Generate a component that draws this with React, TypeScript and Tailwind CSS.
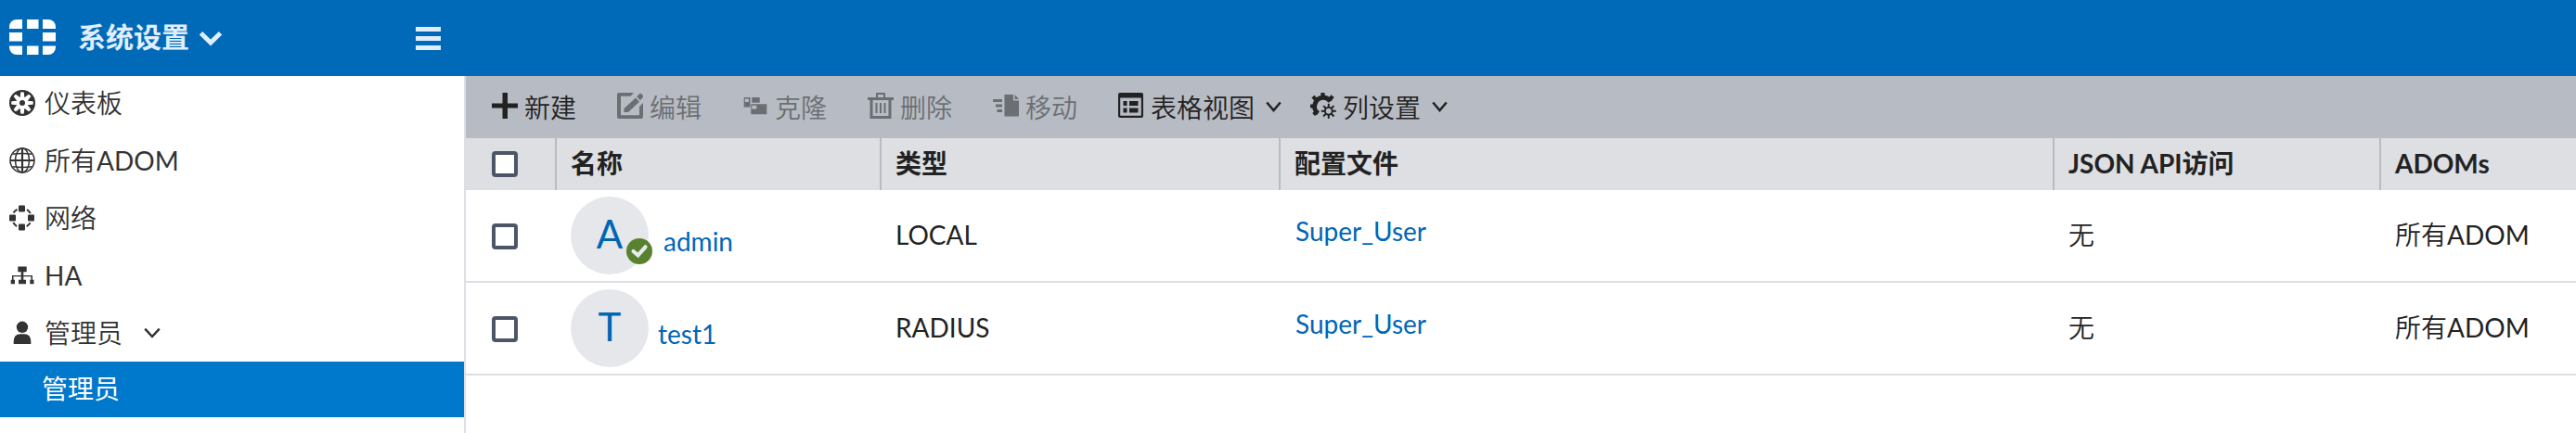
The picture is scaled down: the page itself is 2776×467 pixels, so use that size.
import React from "react";

const FONT = "font-['Lato','Noto_Sans_CJK_SC',sans-serif]";

function Chevron({ w, h, sw, className = "" }: { w: number; h: number; sw: number; className?: string }) {
  return (
    <svg width={w} height={h} viewBox={`0 0 ${w} ${h}`} fill="none" stroke="currentColor" strokeWidth={sw} className={className}>
      <path d={`M${sw / 2} ${sw / 2 + 0.3}L${w / 2} ${h - sw * 0.8}L${w - sw / 2} ${sw / 2 + 0.3}`} />
    </svg>
  );
}

function Label({ text, className = "" }: { text: string; className?: string }) {
  const parts = text.match(/[\x20-\x7e]+|[^\x20-\x7e]+/g) ?? [];
  return (
    <span className={`whitespace-nowrap leading-[40px] ${className}`}>
      {parts.map((p, i) => (
        <span key={i} className={/[\x20-\x7e]/.test(p) ? "font-normal" : "font-[350]"}>
          {p}
        </span>
      ))}
    </span>
  );
}

function Logo() {
  return (
    <svg width="50" height="38" viewBox="0 0 50 38" fill="#fff" className="-mt-[2px]">
      <path d="M8 0H14V10H0V8A8 8 0 0 1 8 0Z" />
      <path d="M19 0H31.500V10H19Z" />
      <path d="M36 0H42A8 8 0 0 1 50 8V10H36Z" />
      <path d="M0 14H14V23.500H0Z" />
      <path d="M36 14H50V23.500H36Z" />
      <path d="M0 28.500H14V38H8A8 8 0 0 1 0 30Z" />
      <path d="M19 28.500H31.500V38H19Z" />
      <path d="M36 28.500H50V30A8 8 0 0 1 42 38H36Z" />
    </svg>
  );
}

function DashboardIcon() {
  return (
    <svg width="28" height="28" viewBox="0 0 28 28" fill="none" stroke="currentColor">
      <circle cx="14" cy="14" r="12.900" strokeWidth="2.200" />
      <circle cx="14" cy="14" r="3" fill="currentColor" stroke="none" />
      {[22.5, 67.5, 112.5, 157.5, 202.5, 247.5, 292.5, 337.5].map((a) => (
        <path key={a} d="M10.300 1L14 7.800L17.700 1Z" fill="currentColor" stroke="none" transform={`rotate(${a} 14 14)`} />
      ))}
    </svg>
  );
}

function GlobeIcon() {
  return (
    <svg width="28" height="28" viewBox="0 0 28 28" fill="none" stroke="currentColor" strokeWidth="1.500">
      <circle cx="14" cy="14" r="13" />
      <ellipse cx="14" cy="14" rx="7.500" ry="13" />
      <path d="M14 1V27M1 14H27" strokeWidth="2.200" />
      <path d="M3.500 7.200Q14 5.800 24.500 7.200M3.500 20.800Q14 22.200 24.500 20.800" />
    </svg>
  );
}

function NetworkIcon() {
  return (
    <svg width="28" height="28" viewBox="0 0 28 28" fill="none" stroke="currentColor" strokeWidth="2">
      <circle cx="13.500" cy="14" r="10.500" strokeDasharray="5.500 10.990" strokeDashoffset="-5.500" />
      <g fill="currentColor" stroke="none">
        <rect x="10" y="0.500" width="7" height="7" rx="1" />
        <rect x="10" y="20.500" width="7" height="7" rx="1" />
        <rect x="0" y="10.500" width="7" height="7" rx="1" />
        <rect x="20" y="10.500" width="7" height="7" rx="1" />
      </g>
    </svg>
  );
}

function HaIcon() {
  return (
    <svg width="28" height="28" viewBox="0 0 28 28" fill="currentColor">
      <path d="M9.300 4.500H18.700V10.300H15.300V14H25V18.700H26.500V23.200H22.300V18.700H23.500V15.300H15.300V18.700H18V23.200H10V18.700H12.700V15.300H4.500V18.700H6V23.200H1.700V18.700H3V14H12.700V10.300H9.300Z" />
    </svg>
  );
}

function UserIcon() {
  return (
    <svg width="28" height="28" viewBox="0 0 28 28" fill="currentColor">
      <circle cx="14" cy="7.800" r="6.200" />
      <path d="M4.700 26V23.500Q4.700 15.300 12 15.300H16Q23.300 15.300 23.300 23.500V26Z" />
    </svg>
  );
}

function PlusIcon() {
  return (
    <svg width="28" height="28" viewBox="0 0 28 28" fill="currentColor">
      <path d="M11.500 0H17V11.500H28V16.500H17V28H11.500V16.500H0V11.500H11.500Z" />
    </svg>
  );
}

function EditIcon() {
  return (
    <svg width="28" height="28" viewBox="0 0 28 28" fill="currentColor">
      <path d="M2 0H18L14.500 3.800H4V24.200H24V15L28 11V26Q28 28 26 28H2Q0 28 0 26V2Q0 0 2 0Z" />
      <path d="M20 5.500L24 9.800L12 21H7.500V17ZM21.200 4.200L24 1.200Q25.200 0.200 26.500 1.400L27.500 2.600Q28.500 4 27.500 5.200L25 8.200Z" />
    </svg>
  );
}

function CloneIcon() {
  return (
    <svg width="28" height="28" viewBox="0 0 28 28" fill="currentColor">
      <path fillRule="evenodd" d="M1.700 5H8.500V15.500H1.700ZM2.800 6.500V10H6.800V6.500Z" />
      <path d="M10.300 5H18.700V10.700H10.300Z" />
      <path fillRule="evenodd" d="M9.300 12.300H26.300V23.300H9.300ZM10.300 13.700V17.500H15.300V13.700Z" />
    </svg>
  );
}

function TrashIcon() {
  return (
    <svg width="28" height="28" viewBox="0 0 28 28" fill="currentColor">
      <path fillRule="evenodd" d="M9 0H19V5H28V8H25.500V28H2.500V8H0V5H9ZM11 2V5H17V2ZM5.500 8V25H22.500V8Z" />
      <path d="M8.500 11H10.500V22H8.500ZM13 11H15V22H13ZM17.500 11H19.500V22H17.500Z" />
    </svg>
  );
}

function MoveIcon() {
  return (
    <svg width="28" height="28" viewBox="0 0 28 28" fill="currentColor">
      <path d="M12.500 2H22V8.500H28V25.500H12.500ZM23.500 2L28 7H23.500Z" />
      <path d="M0 7H10V10H0ZM3 12.500H10V15.500H3ZM4.500 18H10V21H4.500Z" />
    </svg>
  );
}

function TableIcon() {
  return (
    <svg width="28" height="28" viewBox="0 0 28 28" fill="currentColor">
      <path fillRule="evenodd" d="M2 0H25Q27 0 27 2V25Q27 27 25 27H2Q0 27 0 25V2Q0 0 2 0ZM2.200 5.500V24.800H24.800V5.500Z" />
      <path d="M5.500 9H9.500V14H5.500ZM12 9H21.500V14H12ZM5.500 16.500H9.500V21.500H5.500ZM12 16.500H21.500V21.500H12Z" />
    </svg>
  );
}

function GearsIcon() {
  return (
    <svg width="28" height="28" viewBox="0 0 28 28" fill="none" stroke="currentColor">
      <path d="M8.500 22.300A9 9 0 0 1 5.500 11A9 9 0 0 1 21.500 9.500" strokeWidth="5" />
      <path d="M13.500 5V0M5.500 7L3 4M21.500 7L24 3.500M4 14.500H0M6.500 21L3.500 23.500" strokeWidth="4.200" />
      <circle cx="19.800" cy="19.800" r="3.900" strokeWidth="1.900" />
      {[0, 45, 90, 135, 180, 225, 270, 315].map((a) => (
        <path key={a} d="M19.800 15.900V11.800" strokeWidth="2" transform={`rotate(${a} 19.800 19.800)`} />
      ))}
    </svg>
  );
}

const nav = [
  { icon: <DashboardIcon />, label: "仪表板" },
  { icon: <GlobeIcon />, label: "所有ADOM" },
  { icon: <NetworkIcon />, label: "网络" },
  { icon: <HaIcon />, label: "HA" },
  { icon: <UserIcon />, label: "管理员", open: true },
];

const tools = [
  { icon: <PlusIcon />, label: "新建", cls: "w-[135px] text-[#222]" },
  { icon: <EditIcon />, label: "编辑", cls: "w-[135px] text-[#6b6f73]" },
  { icon: <CloneIcon />, label: "克隆", cls: "w-[135px] text-[#6b6f73]" },
  { icon: <TrashIcon />, label: "删除", cls: "w-[135px] text-[#6b6f73]" },
  { icon: <MoveIcon />, label: "移动", cls: "w-[135px] text-[#6b6f73]" },
  { icon: <TableIcon />, label: "表格视图", cls: "w-[207px] text-[#222]", menu: true },
  { icon: <GearsIcon />, label: "列设置", cls: "text-[#222]", menu: true },
];

const GRID = "grid grid-cols-[98px_350px_430px_834px_352px_1fr]";

const rows = [
  { letter: "A", name: "admin", type: "LOCAL", online: true },
  { letter: "T", name: "test1", type: "RADIUS", online: false },
];

function Checkbox() {
  return <span className="block h-7 w-7 rounded-[4px] border-4 border-[#4d5666] bg-white" />;
}

export default function App() {
  return (
    <div className={`${FONT} flex h-[467px] w-[2776px] flex-col overflow-hidden bg-white text-[28px] text-[#222]`}>
      <header className="flex h-[82px] shrink-0 items-center bg-[#006ab8] text-[#e0efff]">
        <div className="flex w-[502px] items-center pl-[10px]">
          <Logo />
          <span className="-mt-[5px] ml-6 text-[30px] leading-[40px] font-bold">系统设置</span>
          <Chevron w={26} h={17} sw={5} className="ml-[10px]" />
          <div className="mt-[1px] mr-[27px] ml-auto flex flex-col gap-[5px]">
            <span className="h-[5px] w-[27px] bg-current" />
            <span className="h-[5px] w-[27px] bg-current" />
            <span className="h-[5px] w-[27px] bg-current" />
          </div>
        </div>
      </header>
      <div className="flex min-h-0 flex-1">
        <nav className="w-[502px] shrink-0 border-r-2 border-[#dddfe4] text-[#333]">
          <div className="-mt-[2px]">
            {nav.map((n) => (
              <div key={n.label} className="flex h-[62px] items-center pl-[10px]">
                {n.icon}
                <Label text={n.label} className="-mt-[1px] ml-[10px]" />
                {n.open && <Chevron w={18} h={12} sw={2.5} className="ml-[23px]" />}
              </div>
            ))}
            <div className="flex h-[60px] items-center bg-[#0078cc] pl-[45px] text-white">
              <span className="-mt-[2px] leading-[40px]">管理员</span>
            </div>
          </div>
        </nav>
        <main className="flex min-w-0 flex-1 flex-col">
          <div className="flex h-[67px] shrink-0 items-center bg-[#b7bbc3] pl-7">
            {tools.map((t) => (
              <div key={t.label} className={`flex shrink-0 items-center ${t.cls}`}>
                <span className="-mt-[3px]">{t.icon}</span>
                <Label text={t.label} className="ml-[7px]" />
                {t.menu && <Chevron w={17} h={12} sw={2.5} className="-mt-[1px] ml-[12px]" />}
              </div>
            ))}
          </div>
          <div className={`${GRID} h-14 shrink-0 items-stretch bg-[#dddfe3] font-bold`}>
            <div className="flex items-center border-r-2 border-[#b7bbc3] pl-7">
              <Checkbox />
            </div>
            {["名称", "类型", "配置文件", "JSON API访问", "ADOMs"].map((h) => (
              <div key={h} className="flex items-center border-r-2 border-[#b7bbc3] pb-[2px] pl-[15px] last:border-r-0">
                {h}
              </div>
            ))}
          </div>
          {rows.map((r) => (
            <div key={r.name} className={`${GRID} h-[100px] shrink-0 border-b-2 border-[#dddfe4]`}>
              <div className="flex items-center pt-[1px] pl-7">
                <Checkbox />
              </div>
              <div className="flex items-center pl-[15px]">
                <div className="relative flex h-[84px] w-[84px] items-center justify-center rounded-full bg-[#e5e7eb] pb-1 text-[42px] text-[#0066b3]">
                  {r.letter}
                  {r.online && (
                    <svg width="28" height="28" viewBox="0 0 28 28" className="absolute top-[45px] left-[60px]">
                      <circle cx="14" cy="14" r="14" fill="#588230" />
                      <path d="M7.500 14L12.500 18.300L20.500 9.300" fill="none" stroke="#e8ebee" strokeWidth="4.200" strokeLinecap="round" />
                    </svg>
                  )}
                </div>
                <span className={`mt-[11px] text-[#0066b8] ${r.online ? "ml-4" : "ml-[10px]"}`}>{r.name}</span>
              </div>
              <div className="flex items-center pb-[2px] pl-[15px]">{r.type}</div>
              <div className="flex items-center pb-[10px] pl-[16px] text-[#0066b8]">Super_User</div>
              <div className="flex items-center pb-[2px] pl-[15px]">
                <Label text="无" />
              </div>
              <div className="flex items-center pb-[2px] pl-[15px]">
                <Label text="所有ADOM" />
              </div>
            </div>
          ))}
        </main>
      </div>
    </div>
  );
}
